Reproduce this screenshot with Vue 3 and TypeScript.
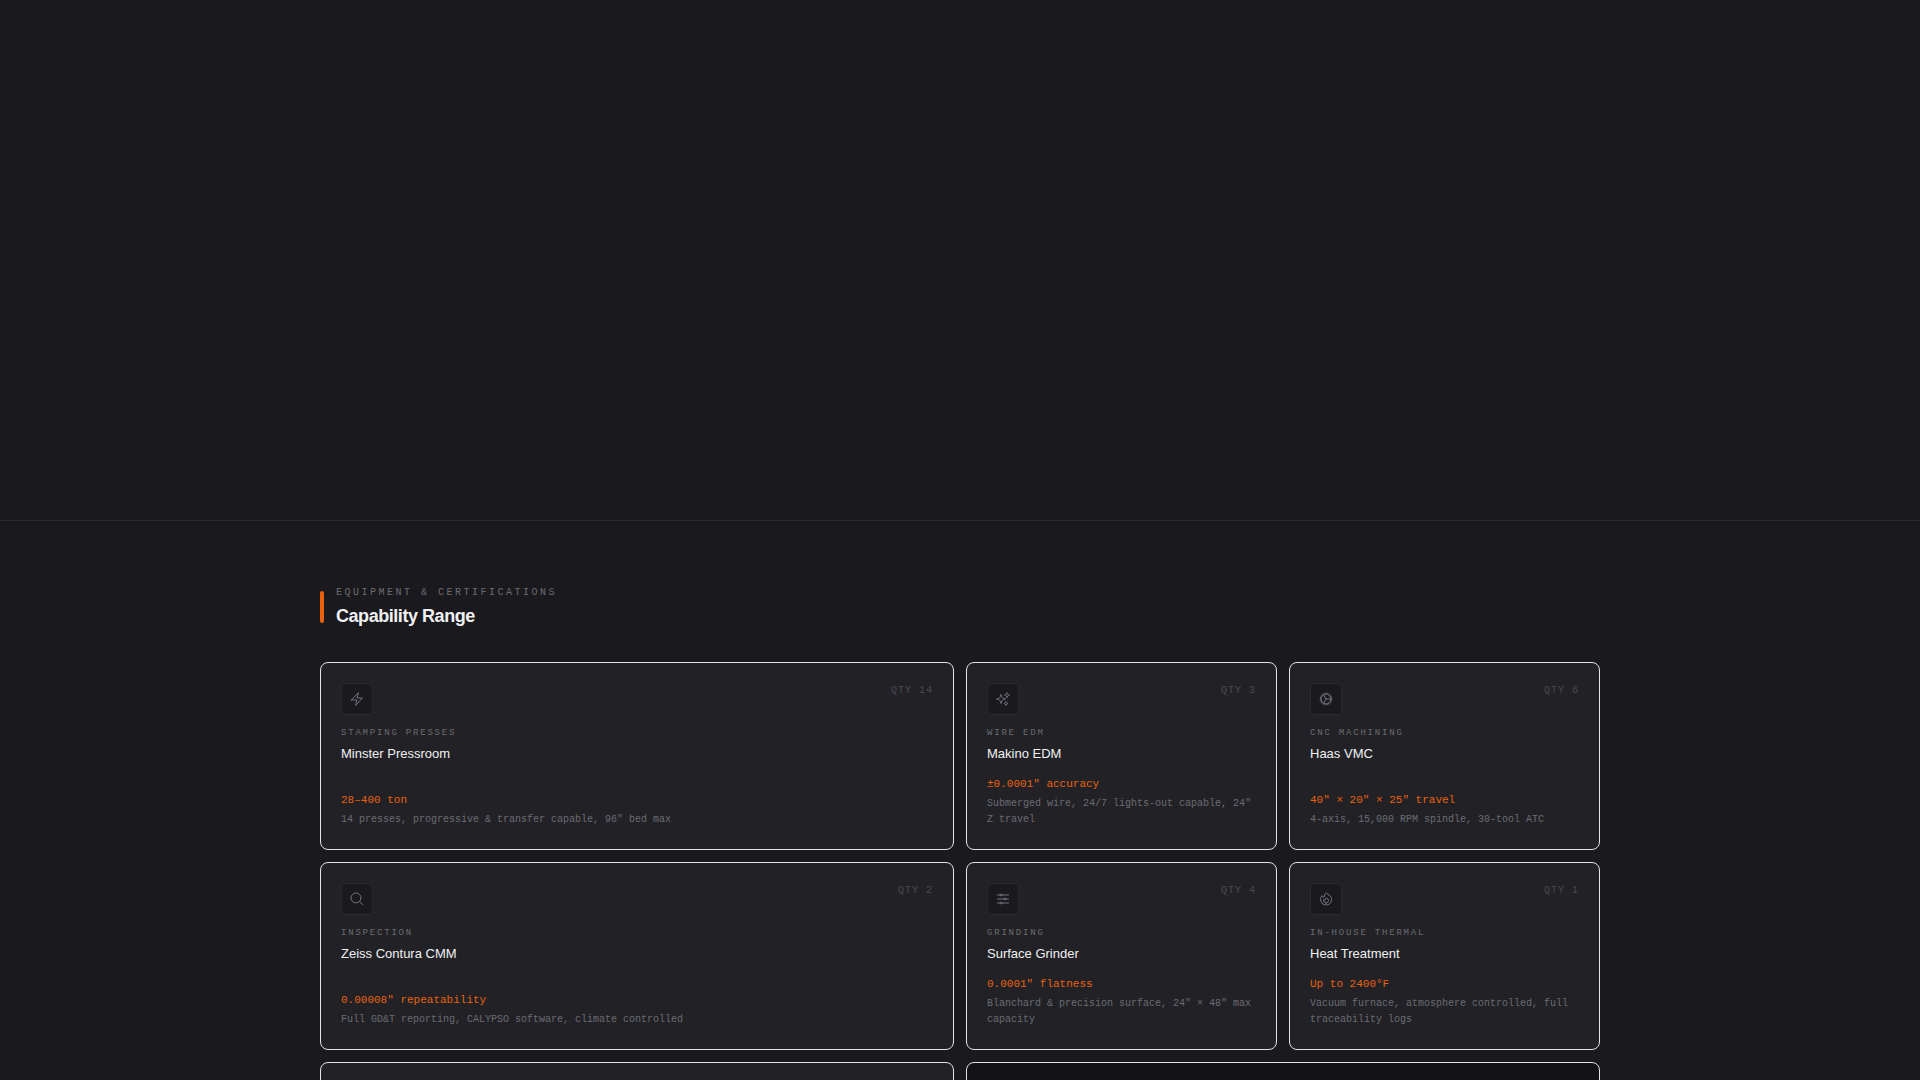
<script setup lang="ts">
interface Machine {
  tag: string
  name: string
  qty: number
  spec: string
  detail: string
  wide: boolean
  icon: string[]
}

const machines: Machine[] = [
  {
    tag: 'Stamping Presses',
    name: 'Minster Pressroom',
    qty: 14,
    spec: '28–400 ton',
    detail: '14 presses, progressive & transfer capable, 96" bed max',
    wide: true,
    icon: ['m3.75 13.5 10.5-11.25L12 10.5h8.25L9.75 21.75 12 13.5H3.75Z'],
  },
  {
    tag: 'Wire EDM',
    name: 'Makino EDM',
    qty: 3,
    spec: '±0.0001" accuracy',
    detail: 'Submerged wire, 24/7 lights-out capable, 24" Z travel',
    wide: false,
    icon: [
      'M9.813 15.904 9 18.75l-.813-2.846a4.5 4.5 0 0 0-3.09-3.09L2.25 12l2.846-.813a4.5 4.5 0 0 0 3.09-3.09L9 5.25l.813 2.846a4.5 4.5 0 0 0 3.09 3.09L15.75 12l-2.846.813a4.5 4.5 0 0 0-3.09 3.09Z',
      'M18.259 8.715 18 9.75l-.259-1.035a3.375 3.375 0 0 0-2.455-2.456L14.25 6l1.036-.259a3.375 3.375 0 0 0 2.455-2.456L18 2.25l.259 1.035a3.375 3.375 0 0 0 2.456 2.456L21.75 6l-1.035.259a3.375 3.375 0 0 0-2.456 2.456Z',
      'M16.894 20.567 16.5 21.75l-.394-1.183a2.25 2.25 0 0 0-1.423-1.423L13.5 18.75l1.183-.394a2.25 2.25 0 0 0 1.423-1.423l.394-1.183.394 1.183a2.25 2.25 0 0 0 1.423 1.423l1.183.394-1.183.394a2.25 2.25 0 0 0-1.423 1.423Z',
    ],
  },
  {
    tag: 'CNC Machining',
    name: 'Haas VMC',
    qty: 6,
    spec: '40" × 20" × 25" travel',
    detail: '4-axis, 15,000 RPM spindle, 30-tool ATC',
    wide: false,
    icon: [
      'M4.5 12a7.5 7.5 0 0 0 15 0m-15 0a7.5 7.5 0 1 1 15 0m-15 0H3m16.5 0H21m-1.5 0H12m-8.457 3.077 1.41-.513m14.095-5.13 1.41-.513M5.106 17.785l1.15-.964m11.49-9.642 1.149-.964M7.501 19.795l.75-1.3m7.5-12.99.75-1.3m-6.063 16.658.26-1.477m2.605-14.772.26-1.477m0 17.726-.26-1.477M10.698 4.614l-.26-1.477M16.5 19.794l-.75-1.299M7.5 4.205 12 12m6.894 5.785-1.149-.964M6.256 7.178l-1.15-.964m15.352 8.864-1.41-.513M4.954 9.435l-1.41-.514M12.002 12l-3.75 6.495',
    ],
  },
  {
    tag: 'Inspection',
    name: 'Zeiss Contura CMM',
    qty: 2,
    spec: '0.00008" repeatability',
    detail: 'Full GD&T reporting, CALYPSO software, climate controlled',
    wide: true,
    icon: ['m21 21-5.197-5.197m0 0A7.5 7.5 0 1 0 5.196 5.196a7.5 7.5 0 0 0 10.607 10.607Z'],
  },
  {
    tag: 'Grinding',
    name: 'Surface Grinder',
    qty: 4,
    spec: '0.0001" flatness',
    detail: 'Blanchard & precision surface, 24" × 48" max capacity',
    wide: false,
    icon: [
      'M10.5 6h9.75M10.5 6a1.5 1.5 0 1 1-3 0m3 0a1.5 1.5 0 1 0-3 0M3.75 6H7.5m3 12h9.75m-9.75 0a1.5 1.5 0 0 1-3 0m3 0a1.5 1.5 0 0 0-3 0m-3.75 0H7.5m9-6h3.75m-3.75 0a1.5 1.5 0 0 1-3 0m3 0a1.5 1.5 0 0 0-3 0m-9.75 0h9.75',
    ],
  },
  {
    tag: 'In-House Thermal',
    name: 'Heat Treatment',
    qty: 1,
    spec: 'Up to 2400°F',
    detail: 'Vacuum furnace, atmosphere controlled, full traceability logs',
    wide: false,
    icon: [
      'M15.362 5.214A8.252 8.252 0 0 1 12 21 8.25 8.25 0 0 1 6.038 7.047 8.287 8.287 0 0 0 9 9.601a8.983 8.983 0 0 1 3.361-6.867 8.21 8.21 0 0 0 3 2.48Z',
      'M12 18a3.75 3.75 0 0 0 .495-7.468 5.99 5.99 0 0 0-1.925 3.547 5.975 5.975 0 0 1-2.133-1.001A3.75 3.75 0 0 0 12 18Z',
    ],
  },
]
</script>

<template>
  <main class="page">
    <div class="intro"></div>
    <section class="capability" aria-labelledby="capability-title">
      <div class="container">
        <header class="heading">
          <span class="accent"></span>
          <div>
            <p class="eyebrow">Equipment &amp; Certifications</p>
            <h2 id="capability-title" class="title">Capability Range</h2>
          </div>
        </header>

        <div class="grid">
          <article v-for="m in machines" :key="m.name" class="card" :class="{ wide: m.wide }">
            <div>
              <div class="card-top">
                <span class="icon-box">
                  <svg class="icon" viewBox="0 0 24 24" aria-hidden="true">
                    <path v-for="d in m.icon" :key="d" :d="d" />
                  </svg>
                </span>
                <span class="qty">QTY {{ m.qty }}</span>
              </div>
              <p class="tag">{{ m.tag }}</p>
              <h3 class="name">{{ m.name }}</h3>
            </div>
            <div>
              <p class="spec">{{ m.spec }}</p>
              <p class="detail">{{ m.detail }}</p>
            </div>
          </article>
          <div class="card wide"></div>
          <div class="card wide dark"></div>
        </div>
      </div>
    </section>
  </main>
</template>

<style>
body {
  background: #1a1a1e;
}
</style>

<style scoped>
.page {
  height: 100vh;
  overflow: hidden;
  background: #1a1a1e;
  color: #f0f0f2;
  font-family: "Liberation Sans", Arial, sans-serif;
}

p,
h2,
h3 {
  margin: 0;
}

.intro {
  height: 520px;
}

.capability {
  border-top: 1px solid #2a2a2e;
  padding: 64px 24px;
}

.container {
  max-width: 1280px;
  margin: 0 auto;
}

.heading {
  display: flex;
  align-items: flex-start;
  gap: 12px;
  margin-bottom: 32px;
}

.accent {
  width: 4px;
  height: 32px;
  margin-top: 6px;
  border-radius: 2px;
  background: #e8610f;
}

.eyebrow,
.qty,
.tag,
.spec,
.detail {
  font-family: "Liberation Mono", "Courier New", monospace;
}

.eyebrow {
  font-size: 10px;
  line-height: 15px;
  letter-spacing: 0.25em;
  text-transform: uppercase;
  color: #6b6b72;
}

.title {
  margin-top: 2px;
  font-size: 18px;
  line-height: 28px;
  font-weight: 700;
  letter-spacing: -0.025em;
}

.grid {
  display: grid;
  grid-template-columns: repeat(4, minmax(0, 1fr));
  grid-auto-rows: minmax(188px, auto);
  gap: 12px;
}

.card {
  box-sizing: border-box;
  display: flex;
  flex-direction: column;
  justify-content: space-between;
  padding: 20px 20px 21px;
  border: 1px solid #e4e4e7;
  border-radius: 8px;
  background: #222226;
}

.wide {
  grid-column: span 2;
}

.dark {
  background: #131316;
}

.card-top {
  display: flex;
  align-items: flex-start;
  justify-content: space-between;
  margin-bottom: 12px;
}

.icon-box {
  box-sizing: border-box;
  display: flex;
  align-items: center;
  justify-content: center;
  width: 32px;
  height: 32px;
  border: 1px solid #2a2a2e;
  border-radius: 4px;
  background: #1a1a1e;
}

.icon {
  width: 16px;
  height: 16px;
  fill: none;
  stroke: #71717a;
  stroke-width: 1.5;
  stroke-linecap: round;
  stroke-linejoin: round;
}

.qty {
  font-size: 10px;
  line-height: 15px;
  letter-spacing: 0.1em;
  color: #4a4a50;
}

.tag {
  font-size: 9px;
  line-height: 12px;
  letter-spacing: 0.2em;
  text-transform: uppercase;
  color: #6b6b72;
}

.name {
  margin-top: 4px;
  font-size: 13px;
  line-height: 22px;
  font-weight: 400;
}

.spec {
  font-size: 11px;
  line-height: 18px;
  color: #e8610f;
}

.detail {
  margin-top: 3px;
  font-size: 10px;
  line-height: 16px;
  color: #6b6b72;
}
</style>
